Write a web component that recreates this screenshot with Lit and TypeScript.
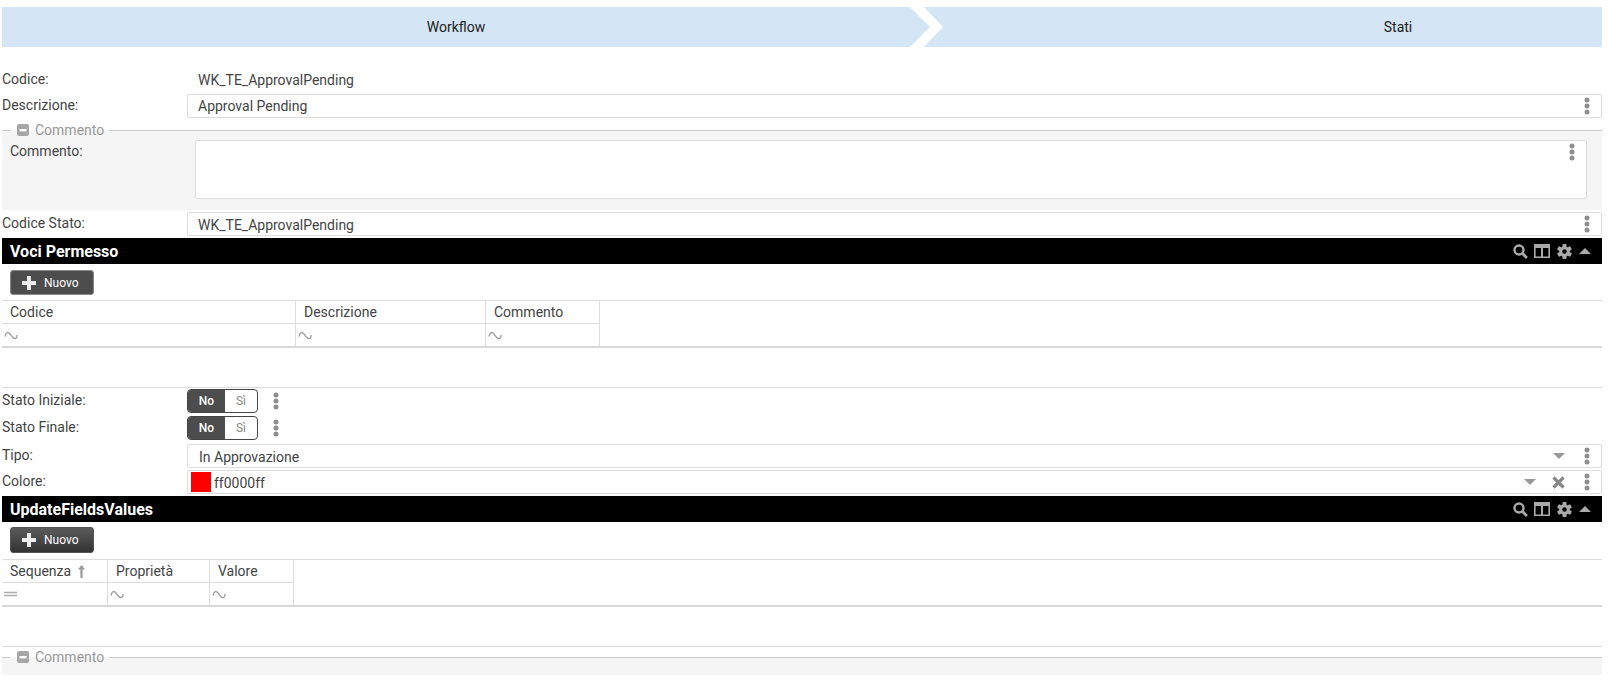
import { LitElement, html, css, svg } from "lit";
import { customElement } from "lit/decorators.js";

const dots = html`<svg class="dots" width="8" height="18" viewBox="0 0 8 18"><g fill="#8f8f8f"><circle cx="4" cy="3" r="2.5"/><circle cx="4" cy="9" r="2.5"/><circle cx="4" cy="15" r="2.5"/></g></svg>`;
const tilde = html`<svg class="fi" width="14" height="10" viewBox="0 0 14 10"><path d="M1 6.5C2 2 4 1.5 6 4s3.5 5.5 5.5 4.5S13 6.5 13 5" fill="none" stroke="#a0a0a0" stroke-width="1.4"/></svg>`;
const equal = html`<svg class="fi" width="14" height="10" viewBox="0 0 14 10"><path d="M0 3.5h13M0 6.5h13" stroke="#aaa" stroke-width="1.5"/></svg>`;
const plus = html`<svg width="16" height="16" viewBox="0 0 16 16"><path d="M8 1v14M1 8h14" stroke="#eee" stroke-width="4"/></svg>`;
const caretDown = html`<svg class="caret" width="12" height="6" viewBox="0 0 12 6"><path d="M0 0h12L6 6z" fill="#999"/></svg>`;
const cross = html`<svg width="13" height="13" viewBox="0 0 13 13"><path d="M1.5 1.5l10 10M11.5 1.5l-10 10" stroke="#888" stroke-width="3.2"/></svg>`;
const minus = html`<svg width="12" height="12" viewBox="0 0 12 12"><rect width="12" height="12" rx="2" fill="#a6a6a6"/><rect x="2.5" y="5" width="7" height="2.4" fill="#fff"/></svg>`;
const sortUp = html`<svg width="9" height="13" viewBox="0 0 9 13"><path d="M4.5 0L8 4.5H5.6V13H3.4V4.5H1z" fill="#999"/></svg>`;

const teeth = [0, 60, 120].map(
  (a) => svg`<rect x="5.5" y="0" width="4" height="15" rx="0.8" fill="#aaa" transform="rotate(${a} 7.5 7.5)"/>`
);
const barIcons = html`<div class="bar-icons">
  <svg width="15" height="15" viewBox="0 0 15 15"><circle cx="6" cy="6" r="4.5" fill="none" stroke="#aaa" stroke-width="2.4"/><path d="M9.3 9.3l4.6 4.6" stroke="#aaa" stroke-width="2.8"/></svg>
  <svg class="ic-col" width="16" height="14" viewBox="0 0 16 14"><path d="M0 0h16v14H0zM1.6 4v8.4h5.4V4zM9 4v8.4h5.4V4z" fill="#aaa" fill-rule="evenodd"/></svg>
  <svg width="15" height="15" viewBox="0 0 15 15">${teeth}<circle cx="7.5" cy="7.5" r="5.3" fill="#aaa"/><circle cx="7.5" cy="7.5" r="2.2" fill="#000"/></svg>
  <svg width="12" height="6" viewBox="0 0 12 6"><path d="M0 6h12L6 0z" fill="#aaa"/></svg>
</div>`;

@customElement("app-root")
export class AppRoot extends LitElement {
  static styles = css`
    :host { display: block; font-family: Roboto, "Liberation Sans", sans-serif; font-size: 14px; color: #444; }
    .page { width: 1611px; box-sizing: border-box; padding: 7px 9px 0 2px; }
    .tabs { display: flex; height: 40px; }
    .tab { background: #d4e5f6; display: flex; align-items: center; justify-content: center; color: #222; box-sizing: border-box; }
    .tab1 { width: 928px; padding-right: 20px; clip-path: polygon(0 0, 908px 0, 928px 50%, 908px 100%, 0 100%); }
    .tab2 { flex: 1; margin-left: -6px; padding-left: 270px; clip-path: polygon(0 0, 100% 0, 100% 100%, 0 100%, 19px 50%); }
    .row { display: grid; grid-template-columns: 185px 1fr; height: 24px; margin-top: 2px; }
    .row.first { margin-top: 21px; }
    .row.t3 { margin-top: 3px; }
    .row.t4 { margin-top: 4px; }
    .row.t1 { margin-top: 1px; }
    .lbl { line-height: 22px; white-space: nowrap; }
    .val { padding-left: 11px; line-height: 24px; }
    .input { border: 1px solid #ddd; border-radius: 2px; box-sizing: border-box; background: #fff; display: flex; align-items: center; padding: 0 10px; min-width: 0; }
    .input .grow { flex: 1; }
    .input .low { padding-top: 2px; }
    .input .tipo { padding-left: 1px; }
    .input .icon-slot { display: flex; align-items: center; margin-right: 18px; }
    .input .icon-slot.near { margin-right: 16px; }
    .swatch { width: 20px; height: 20px; background: #f00; margin: 0 3px 0 -7px; }
    fieldset { margin: 4px 0 0; padding: 2px 15px 11px 0; border: 0; border-top: 1px solid #ccc; background: #f5f5f5; min-width: 0; }
    fieldset.end { margin-top: 2px; padding: 0 0 10px; }
    legend { margin-left: 8px; padding: 0 5px 0 7px; color: #999; display: flex; align-items: center; gap: 6px; height: 16px; line-height: 16px; }
    .f-row { display: grid; grid-template-columns: 185px 1fr; padding-left: 8px; }
    .f-row .lbl { line-height: 22px; }
    .area { border: 1px solid #ddd; border-radius: 2px; background: #fff; height: 59px; box-sizing: border-box; display: flex; justify-content: flex-end; padding: 2px 10px; }
    .bar { background: #000; color: #fff; height: 26px; margin-top: 2px; display: flex; align-items: center; justify-content: space-between; padding: 0 11px 0 8px; font-weight: 700; font-size: 16px; }
    .bar-icons { display: flex; align-items: center; gap: 7px; }
    .ic-col { margin-left: -1px; }
    .btn { margin: 6px 0 0 8px; width: 84px; height: 25px; box-sizing: border-box; border: 1px solid #888; border-radius: 3px; background: #4d4d4d; color: #fff; font-size: 12px; font-weight: 400; display: flex; align-items: center; gap: 7px; padding-left: 10px; }
    .btn.grad { margin-top: 5px; height: 26px; border-color: #555; background: linear-gradient(#5c5c5c, #333); }
    .tbl { margin-top: 5px; border-top: 1px solid #ddd; border-bottom: 2px solid #d8d8d8; display: grid; }
    .tbl.grad { margin-top: 6px; }
    .cells { display: grid; height: 23px; box-sizing: border-box; }
    .cells > div { border-right: 1px solid #ddd; box-sizing: border-box; }
    .head > div { border-bottom: 1px solid #ddd; padding-left: 8px; line-height: 21px; white-space: nowrap; display: flex; align-items: center; gap: 6px; }
    .filt > div { display: flex; align-items: center; padding-left: 2px; height: 22px; }
    .cells.filt { height: 22px; }
    .fi { display: block; }
    .sep { margin-top: 39px; border-top: 1px solid #ddd; }
    .toggle-wrap { display: flex; align-items: center; gap: 14px; }
    .toggle { width: 71px; height: 24px; box-sizing: border-box; border: 1px solid #444; border-radius: 4px; display: flex; overflow: hidden; font-size: 12px; line-height: 22px; text-align: center; background: #fff; }
    .toggle .on { width: 37px; background: #4d4d4d; color: #fff; font-weight: 500; }
    .toggle .off { flex: 1; color: #888; }
  `;

  private table(cols: number[], heads: unknown[], filts: unknown[], grad = false) {
    const tpl = cols.map((c) => `${c}px`).join(" ");
    return html`<div class="tbl ${grad ? "grad" : ""}">
      <div class="cells head" style="grid-template-columns:${tpl}">${heads.map((h) => html`<div>${h}</div>`)}</div>
      <div class="cells filt" style="grid-template-columns:${tpl}">${filts.map((f) => html`<div>${f}</div>`)}</div>
    </div>`;
  }

  private toggle(label: string, cls: string) {
    return html`<div class="row ${cls}"><div class="lbl">${label}</div>
      <div class="toggle-wrap"><div class="toggle"><div class="on">No</div><div class="off">Sì</div></div>${dots}</div></div>`;
  }

  render() {
    return html`<div class="page">
      <div class="tabs"><div class="tab tab1">Workflow</div><div class="tab tab2">Stati</div></div>

      <div class="row first"><div class="lbl">Codice:</div><div class="val">WK_TE_ApprovalPending</div></div>
      <div class="row"><div class="lbl">Descrizione:</div><div class="input"><span class="grow">Approval Pending</span>${dots}</div></div>

      <fieldset>
        <legend>${minus}<span>Commento</span></legend>
        <div class="f-row"><div class="lbl">Commento:</div><div class="area">${dots}</div></div>
      </fieldset>

      <div class="row"><div class="lbl">Codice Stato:</div><div class="input"><span class="grow low">WK_TE_ApprovalPending</span>${dots}</div></div>

      <div class="bar"><span>Voci Permesso</span>${barIcons}</div>
      <div class="btn">${plus}<span>Nuovo</span></div>
      ${this.table([294, 190, 114], ["Codice", "Descrizione", "Commento"], [tilde, tilde, tilde])}
      <div class="sep"></div>

      ${this.toggle("Stato Iniziale:", "t1")}
      ${this.toggle("Stato Finale:", "t3")}
      <div class="row t4"><div class="lbl">Tipo:</div><div class="input"><span class="grow tipo low">In Approvazione</span><span class="icon-slot">${caretDown}</span>${dots}</div></div>
      <div class="row"><div class="lbl">Colore:</div><div class="input"><span class="swatch"></span><span class="grow low">ff0000ff</span><span class="icon-slot near">${caretDown}</span><span class="icon-slot">${cross}</span>${dots}</div></div>

      <div class="bar"><span>UpdateFieldsValues</span>${barIcons}</div>
      <div class="btn grad">${plus}<span>Nuovo</span></div>
      ${this.table(
        [106, 102, 84],
        [html`Sequenza ${sortUp}`, "Proprietà", "Valore"],
        [equal, tilde, tilde],
        true
      )}
      <div class="sep"></div>

      <fieldset class="end"><legend>${minus}<span>Commento</span></legend></fieldset>
    </div>`;
  }
}
